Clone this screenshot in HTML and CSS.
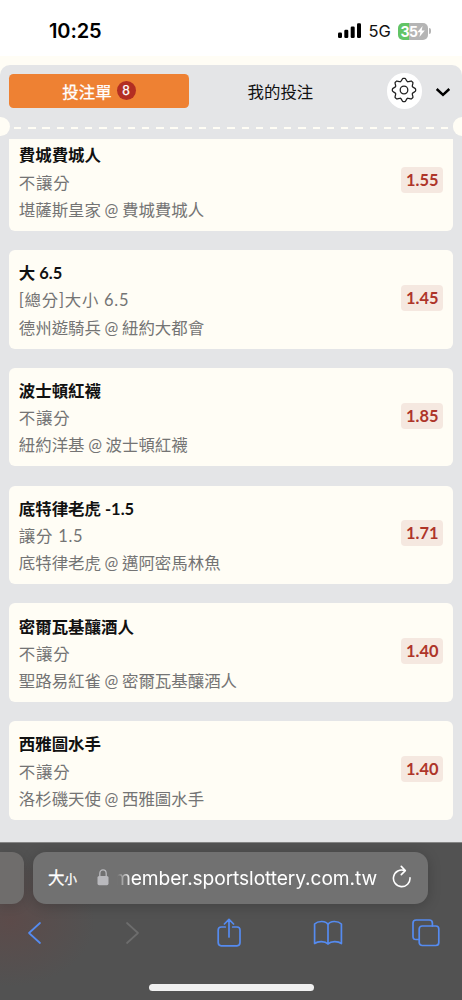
FILE: index.html
```html
<!DOCTYPE html>
<html lang="zh-Hant">
<head>
<meta charset="utf-8">
<meta name="viewport" content="width=device-width, initial-scale=1">
<title>投注單</title>
<link rel="stylesheet" href="styles.css">
</head>
<body>
<div class="phone">
  <header class="status">
    <span class="clock">10:25</span>
    <div class="indicators">
      <svg class="signal" width="24" height="16" viewBox="0 0 24 16"><rect x="0" y="9.5" width="4" height="5.5" rx="1.2"/><rect x="6.3" y="6.8" width="4" height="8.2" rx="1.2"/><rect x="12.7" y="3.6" width="4" height="11.4" rx="1.2"/><rect x="19" y="0.3" width="4" height="14.7" rx="1.2"/></svg>
      <span class="network">5G</span>
      <div class="battery"><span>35</span><svg width="8" height="11" viewBox="0 0 8 11"><path d="M5.6 0 0.3 6.2H3.4L2.4 11 7.8 4.6H4.7Z" fill="#fff"/></svg></div>
      <i class="battery-cap"></i>
    </div>
  </header>
  <main class="page">
    <section class="slip">
      <div class="tabs">
        <div class="tab tab-active"><span>投注單</span><b class="count">8</b></div>
        <div class="tab">我的投注</div>
        <div class="settings">
          <svg width="26" height="26" viewBox="-13 -13 26 26" fill="none" stroke="#222" stroke-width="1.3" stroke-linecap="round">
            <defs><path id="tooth" d="M-3.5-8.45C-2-9.1-2.1-11.3-.9-11.6H.9C2.1-11.3 2-9.1 3.5-8.45"/></defs>
            <use href="#tooth"/><use href="#tooth" transform="rotate(45)"/><use href="#tooth" transform="rotate(90)"/><use href="#tooth" transform="rotate(135)"/><use href="#tooth" transform="rotate(180)"/><use href="#tooth" transform="rotate(225)"/><use href="#tooth" transform="rotate(270)"/><use href="#tooth" transform="rotate(315)"/>
            <circle r="3.8"/>
          </svg>
        </div>
        <svg class="collapse" width="16" height="10" viewBox="0 0 16 10"><path d="M1.7 2 8 7.8 14.3 2" fill="none" stroke="#000" stroke-width="2.5"/></svg>
      </div>
      <div class="perforation"><i class="notch"></i><i class="dashes"></i><i class="notch notch-right"></i></div>
      <div class="bets">
        <article class="bet"><div><h2>費城費城人</h2><p class="market">不讓分</p><p>堪薩斯皇家<span class="at">@</span>費城費城人</p></div><span class="odds">1.55</span></article>
        <article class="bet"><div><h2>大 6.5</h2><p class="market">[總分]大小 6.5</p><p>德州遊騎兵<span class="at">@</span>紐約大都會</p></div><span class="odds">1.45</span></article>
        <article class="bet"><div><h2>波士頓紅襪</h2><p class="market">不讓分</p><p>紐約洋基<span class="at">@</span>波士頓紅襪</p></div><span class="odds">1.85</span></article>
        <article class="bet"><div><h2>底特律老虎 -1.5</h2><p class="market">讓分 1.5</p><p>底特律老虎<span class="at">@</span>邁阿密馬林魚</p></div><span class="odds">1.71</span></article>
        <article class="bet"><div><h2>密爾瓦基釀酒人</h2><p class="market">不讓分</p><p>聖路易紅雀<span class="at">@</span>密爾瓦基釀酒人</p></div><span class="odds">1.40</span></article>
        <article class="bet"><div><h2>西雅圖水手</h2><p class="market">不讓分</p><p>洛杉磯天使<span class="at">@</span>西雅圖水手</p></div><span class="odds">1.40</span></article>
      </div>
    </section>
  </main>
  <footer class="browser">
    <div class="address-row">
      <div class="previous-page"></div>
      <div class="address">
        <span class="text-size">大<small>小</small></span>
        <svg class="lock" width="12" height="17" viewBox="0 0 12 17"><path d="M2.8 8V4.5a3.2 3.6 0 0 1 6.4 0V8" fill="none" stroke="#b9b9bd" stroke-width="1.3"/><rect x="0.5" y="7" width="11" height="9.2" rx="1.6" fill="#b9b9bd"/></svg>
        <span class="host">member.sportslottery.com.tw</span>
        <svg class="reload" width="20" height="24" viewBox="0 0 20 24" fill="none" stroke="#fff" stroke-width="1.6" stroke-linecap="round" stroke-linejoin="round"><path d="M18 12.7A8.3 8.3 0 1 1 12.7 5.6M9.3 1.4 13.3 5.6 9.3 9.6"/></svg>
      </div>
    </div>
    <nav class="tools">
      <svg width="28" height="30" viewBox="0 0 28 30"><path d="M19 5 8 15 19 25"/></svg>
      <svg class="disabled" width="28" height="30" viewBox="0 0 28 30"><path d="M9 5 20 15 9 25"/></svg>
      <svg width="28" height="30" viewBox="0 0 28 30"><path d="M10.3 9H6.2Q3.2 9 3.2 12V24.6Q3.2 27.8 6.2 27.8H22Q25 27.8 25 24.6V12Q25 9 22 9H17.7M14 19V1.5M9.4 6 14 1.3 18.6 6"/></svg>
      <svg width="30" height="30" viewBox="0 0 30 30"><path d="M15 6.5C13 2.6 5 2.6 1.6 6V25.5C4.8 23 12 22.8 15 26 18 22.8 25.2 23 28.4 25.5V6C25 2.6 17 2.6 15 6.5V26"/></svg>
      <svg width="28" height="30" viewBox="0 0 28 30"><path d="M7 21.5H4.2Q1 21.5 1 18.5V5.2Q1 2 4.2 2H17.3Q20.4 2 20.4 5.2V8"/><rect x="7.2" y="8" width="19.6" height="19.5" rx="3"/></svg>
    </nav>
    <div class="home-bar"></div>
  </footer>
</div>
</body>
</html>
```
FILE: styles.css
```css
* { box-sizing: border-box; }
body { margin: 0; background: #fffdf5; }
h2, p { margin: 0; }
svg { display: block; flex: none; }

.phone {
  display: flex;
  flex-direction: column;
  width: 462px;
  height: 1000px;
  overflow: hidden;
  color: #111;
  font-family: Lato, "Noto Sans CJK TC", sans-serif;
}

/* Status bar */
.status {
  display: flex;
  justify-content: space-between;
  flex: none;
  height: 56px;
  padding: 19px 31px 0 49px;
  background: #fff;
  font-family: Inter, "Liberation Sans", sans-serif;
}
.clock { font-size: 20px; font-weight: 600; line-height: 24px; letter-spacing: -0.1px; color: #000; }
.indicators { display: flex; align-items: center; height: 24px; }
.signal { fill: #000; }
.network { margin-left: 6.5px; width: 29.5px; font-size: 16.5px; font-weight: 400; color: #111; }
.battery {
  display: flex;
  align-items: center;
  justify-content: center;
  width: 30px;
  height: 17px;
  border-radius: 5px;
  background: linear-gradient(90deg, #62c466 36%, #b5b5b5 36%);
  color: #fff;
  font-size: 14px;
  font-weight: 700;
}
.battery span { letter-spacing: -0.6px; }
.battery-cap { width: 2px; height: 6px; margin-left: 1px; border-radius: 0 2px 2px 0; background: #b5b5b5; }

/* Bet slip */
.page { flex: none; height: 786px; padding-top: 9px; background: #fffdf5; }
.slip { height: 777px; border-radius: 10px 10px 0 0; background: #e4e5e7; overflow: hidden; }
.tabs { display: flex; align-items: center; height: 52px; padding: 0 9.2px; }
.tab {
  display: flex;
  align-items: center;
  justify-content: center;
  width: 179.5px;
  height: 33.5px;
  padding-bottom: 1px;
  border-radius: 4.5px;
  font-size: 16.45px;
}
.tab + .tab { margin-left: 2px; }
.tab-active { background: #ee8133; color: #fff; -webkit-text-stroke: 0.25px; }
.count {
  width: 19px;
  height: 19px;
  margin-left: 5px;
  border-radius: 50%;
  background: #b32e22;
  font-size: 13px;
  font-weight: 400;
  line-height: 19px;
  text-align: center;
}
.settings {
  display: flex;
  align-items: center;
  justify-content: center;
  width: 35.5px;
  height: 35.5px;
  margin-left: 16.5px;
  border-radius: 50%;
  background: #fff;
}
.settings svg { margin-top: -2px; }
.collapse { margin-left: 13px; margin-top: 1px; }

.perforation { display: flex; align-items: center; justify-content: space-between; height: 19px; }
.notch { width: 9.5px; height: 19px; border-radius: 0 9.5px 9.5px 0; background: #fffdf5; }
.notch-right { border-radius: 9.5px 0 0 9.5px; }
.dashes {
  width: 434px;
  height: 2.6px;
  margin-top: 3px;
  background: repeating-linear-gradient(90deg, #fffdf5 0 7.3px, transparent 7.3px 14.22px);
}

.bets {
  display: flex;
  flex-direction: column;
  gap: 19.2px;
  margin-top: 2.5px;
  padding: 0 9.3px;
  overflow: hidden;
}
.bet {
  display: flex;
  align-items: center;
  justify-content: space-between;
  flex: none;
  height: 98.6px;
  padding: 3.4px 9.5px 0;
  border-radius: 6px;
  background: #fffdf5;
  color: #747474;
  font-size: 16.45px;
  line-height: 27.2px;
}
.bet:first-child { margin-top: -6.3px; }
.bet h2 { color: #111; font-size: 16.45px; font-weight: 700; line-height: 27.2px; }
.market { letter-spacing: 0.75px; }
.at { margin: 0 3.6px; }
.odds {
  width: 42px;
  height: 26px;
  margin-top: -6.4px;
  border-radius: 4px;
  background: #f5e8e0;
  color: #ae3529;
  font-size: 16.4px;
  font-weight: 700;
  line-height: 25px;
  text-align: center;
}

/* Browser toolbar */
.browser {
  flex: none;
  height: 158px;
  padding-top: 9px;
  border-top: 1px solid #858585;
  background: radial-gradient(ellipse 85px 65px at 10px 78px, #5c4b4a, transparent), #525252;
}
.address-row { display: flex; gap: 9.5px; }
.previous-page { width: 23.5px; height: 52px; border-radius: 0 12px 12px 0; background: #6f6d6c; box-shadow: 0 2px 12px #0002; }
.address {
  display: flex;
  align-items: center;
  width: 395px;
  height: 52px;
  padding-left: 15px;
  border-radius: 13px;
  background: #717171;
  box-shadow: 0 2px 14px #0003;
  color: #fff;
}
.text-size { width: 49px; padding-bottom: 2px; font-size: 16.5px; -webkit-text-stroke: 0.3px; white-space: nowrap; }
.text-size small { font-size: 12.5px; }
.lock { margin-top: -2px; }
.host {
  display: flex;
  justify-content: flex-end;
  width: 260px;
  margin-left: 8px;
  padding-bottom: 1px;
  overflow: hidden;
  font-family: Inter, "Liberation Sans", sans-serif;
  font-size: 19.2px;
  line-height: 28px;
  letter-spacing: -0.1px;
  white-space: nowrap;
  -webkit-mask-image: linear-gradient(90deg, transparent, #000 14px);
  mask-image: linear-gradient(90deg, transparent, #000 14px);
}
.reload { margin-left: 15px; margin-top: -3px; }
.tools {
  display: flex;
  align-items: center;
  justify-content: space-between;
  height: 58px;
  padding: 0 22px 0 20.5px;
  fill: none;
  stroke: #558bf0;
  stroke-width: 1.7;
  stroke-linecap: round;
  stroke-linejoin: round;
}
.tools .disabled { stroke: #6d6d6d; }
.home-bar { width: 165px; height: 6.5px; margin: 22px auto 0; border-radius: 4px; background: #f0f0f0; }
```
